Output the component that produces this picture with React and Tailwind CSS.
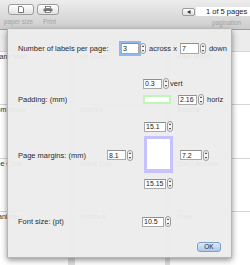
import React from 'react';

const FONT = { fontFamily: '"Liberation Sans", Arial, sans-serif' };

const Stepper = () => (
  <svg width="6" height="11" viewBox="0 0 6 11" className="shrink-0">
    <rect x="0.5" y="0.5" width="5" height="10" rx="2.5" fill="#f6f6f6" stroke="#9a9a9a" />
    <path d="M3 2.3 L4.2 4.1 H1.8Z" fill="#3a3a3a" />
    <path d="M3 8.7 L4.2 6.9 H1.8Z" fill="#3a3a3a" />
  </svg>
);

const Spin = ({ value, w, h = 'h-[10px]', focus }) => (
  <div className="flex items-center gap-[1px]">
    <input
      readOnly
      defaultValue={value}
      className={`${w} ${h} border border-[#a9a9a9] border-t-[#8e8e8e] bg-white px-[1px] text-[7px] leading-[8px] text-[#222] outline-none ${focus ? 'shadow-[0_0_0_2px_#8fb8ee]' : ''}`}
    />
    <Stepper />
  </div>
);

const bgCols = [
  { w: 'w-[88px]', pl: 'pl-[13px]', names: ['Frank Man', 'Tom Snow', 'Joe Crow', 'Danielle'] },
  { w: 'w-[90px]', pl: 'pl-[5px]', names: ['Mr Dixon', 'Granny', 'Marie Day', 'Simba A'] },
  { w: 'w-[80px]', pl: 'pl-[7px]', names: ['Kate Smith', 'Suzette', "Don't Answer", 'Pixie'] },
];

export default function App() {
  return (
    <div className="relative w-[250px] h-[265px] overflow-hidden bg-white" style={FONT}>
      {/* TOOLBAR */}
      <div className="flex h-[30px] justify-between border-b border-[#9f9f9f] bg-gradient-to-b from-[#ededed] to-[#cdcdcd]">
        <div className="flex flex-col">
          <div className="flex pl-[8px] pt-[4px]">
            <button className="flex h-[11px] w-[26px] items-center justify-center rounded-[3px] border border-[#9c9c9c] bg-gradient-to-b from-white to-[#e2e2e2]">
              <svg width="6" height="7" viewBox="0 0 6 7">
                <path d="M0.5 0.5 H4 L5.5 2 V6.5 H0.5Z" fill="#fff" stroke="#555" strokeWidth="0.8" />
              </svg>
            </button>
            <button className="ml-[3px] flex h-[11px] w-[22px] items-center justify-center rounded-[3px] border border-[#9c9c9c] bg-gradient-to-b from-white to-[#e2e2e2]">
              <svg width="10" height="7" viewBox="0 0 10 7">
                <rect x="2.5" y="0.5" width="5" height="2" fill="#fff" stroke="#555" strokeWidth="0.7" />
                <rect x="0.5" y="2.5" width="9" height="3" rx="0.8" fill="#777" />
                <rect x="2.5" y="4.5" width="5" height="2" fill="#fff" stroke="#555" strokeWidth="0.7" />
              </svg>
            </button>
          </div>
          <div className="mt-[3px] flex whitespace-nowrap pl-[4px] text-[6.3px] leading-[8px] text-[#a2a2a2]">
            <span>paper size</span>
            <span className="ml-[10px]">Print</span>
          </div>
        </div>
        <div className="flex flex-col items-start pt-[7px]">
          <div className="flex items-center">
            <button className="flex h-[8px] w-[13px] items-center justify-center rounded-[2px] border border-[#9c9c9c] bg-gradient-to-b from-white to-[#dedede]">
              <svg width="4" height="4" viewBox="0 0 4 4"><path d="M0 2 L3.5 0 V4Z" fill="#333" /></svg>
            </button>
            <div className="ml-[1px] flex h-[9px] w-[54px] items-center whitespace-nowrap bg-white pl-[10px] text-[7.5px] leading-[9px] text-[#222]">1 of 5 pages</div>
          </div>
          <span className="ml-[30px] mt-[3px] text-[6.3px] leading-[8px] text-[#a2a2a2]">pagination</span>
        </div>
      </div>

      {/* LABEL SHEET BEHIND */}
      <div className="-ml-[20px] flex h-[235px] gap-x-[7px] bg-[#dedede]">
        {bgCols.map((c, i) => (
          <div key={i} className={`${c.w} ${i === 2 ? '-ml-[2px]' : ''} flex shrink-0 flex-col`}>
            <div className="h-[22px] bg-[#ececec]" />
            {c.names.map((n) => (
              <div key={n} className={`h-[57px] whitespace-nowrap border-t border-[#d6d6d6] bg-white pt-[1px] ${c.pl} text-[7px] leading-[8px] text-[#333]`}>
                {n}
              </div>
            ))}
          </div>
        ))}
      </div>

      {/* SHEET DIALOG */}
      <div className="absolute left-[7px] top-[29px] flex h-[229px] w-[225px] flex-col whitespace-nowrap border-x border-b border-[#b5b5b5] bg-[#ececec]/95 px-[10px] pt-[14px] text-[7.5px] text-[#2b2b2b] shadow-[0_2px_6px_rgba(0,0,0,0.45)]">
        {/* labels per page */}
        <div className="flex h-[11px] items-center">
          <span className="w-[89px] shrink-0 leading-[9px]">Number of labels per page:</span>
          <div className="ml-[14px] flex items-center">
            <Spin value="3" w="w-[18px]" h="h-[11px]" focus />
            <span className="ml-[3px] leading-[9px]">across x</span>
            <div className="ml-[3px]">
              <Spin value="7" w="w-[19px]" h="h-[11px]" />
            </div>
            <span className="ml-[3px] leading-[9px]">down</span>
          </div>
        </div>

        {/* padding */}
        <div className="mt-[24px] flex items-end">
          <span className="h-[10px] w-[89px] shrink-0 leading-[10px]">Padding: (mm)</span>
          <div className="ml-[36px] flex flex-col gap-[5px]">
            <div className="flex items-center">
              <Spin value="0.3" w="w-[19px]" />
              <span className="ml-[1px] leading-[9px]">vert</span>
            </div>
            <div className="flex items-center">
              <div className="h-[9px] w-[28px] border-2 border-[#bff7b4] bg-white" />
              <div className="ml-[7px]">
                <Spin value="2.16" w="w-[19px]" />
              </div>
              <span className="ml-[3px] leading-[9px]">horiz</span>
            </div>
          </div>
        </div>

        {/* page margins */}
        <div className="mt-[16px] flex items-center">
          <span className="w-[89px] shrink-0 leading-[9px]">Page margins: (mm)</span>
          <Spin value="8.1" w="w-[19px]" />
          <div className="ml-[11px] flex w-[29px] flex-col">
            <Spin value="15.1" w="w-[22px]" />
            <div className="mt-[4px] h-[37px] w-[29px] border-[3px] border-b-[4px] border-[#c6c2ff] bg-white" />
            <div className="mt-[5px]">
              <Spin value="15.15" w="w-[22px]" />
            </div>
          </div>
          <div className="ml-[7px]">
            <Spin value="7.2" w="w-[22px]" />
          </div>
        </div>

        {/* font size */}
        <div className="mt-[27px] flex items-center">
          <span className="w-[89px] shrink-0 leading-[9px]">Font size: (pt)</span>
          <div className="ml-[35px]">
            <Spin value="10.5" w="w-[22px]" />
          </div>
        </div>

        {/* ok */}
        <div className="mt-[15px] flex justify-end">
          <button className="h-[10px] w-[24px] rounded-[3px] border border-[#7d9ec6] bg-gradient-to-b from-[#dcebf9] to-[#a9c9ec] text-[6.5px] leading-[8px] text-[#222]">OK</button>
        </div>
      </div>
    </div>
  );
}
